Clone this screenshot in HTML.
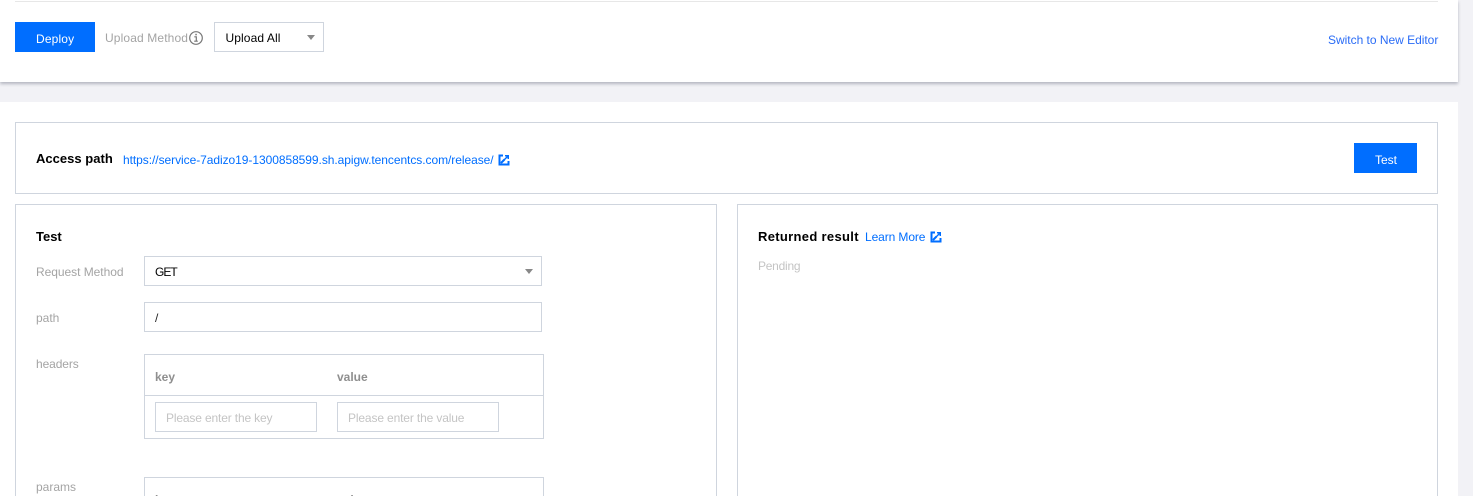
<!DOCTYPE html>
<html>
<head>
<meta charset="utf-8">
<style>
html,body{margin:0;padding:0;width:1473px;height:496px;overflow:hidden;background:#f2f2f6}
body{position:relative;font-family:"Liberation Sans","Noto Sans CJK SC",sans-serif;font-size:12px;color:#000}
.a{position:absolute;box-sizing:border-box}
.t{position:absolute;white-space:nowrap;line-height:18px;height:18px}
.b{border:1px solid #cfd5de;background:#fff}
.g{color:#a4a4a4}
.ph{color:#c4c4c4}
.l{color:#006eff}
.h{font-weight:bold;font-size:13px;color:#000}
.th{font-weight:bold;color:#8f8f8f}
.tri{position:absolute;width:0;height:0;border-left:4.5px solid transparent;border-right:4.5px solid transparent;border-top:5px solid #888}
svg{position:absolute}
</style>
</head>
<body>
<div class="a" style="left:0;top:0;width:1458px;height:82px;background:#fff;box-shadow:0 2px 3px rgba(54,58,80,.32)"></div>
<div class="a" style="left:0;top:102px;width:1458px;height:394px;background:#fff"></div>
<div class="a" style="left:15px;top:1px;width:1423px;height:1px;background:#e7e7e7"></div>

<div class="a" style="left:15px;top:22px;width:80px;height:30px;background:#006eff"></div>
<div class="t" style="left:36px;top:30px;color:#fff;letter-spacing:.15px">Deploy</div>
<div class="t g" style="left:105px;top:29px;letter-spacing:.13px">Upload Method</div>
<svg style="left:188px;top:30px" width="16" height="16" viewBox="0 0 16 16">
  <circle cx="8" cy="8" r="6.3" fill="none" stroke="#777" stroke-width="1.2"/>
  <rect x="7.3" y="3.8" width="1.5" height="1.5" fill="#777"/>
  <path d="M6.3 6.8H8.3V11M6.2 11.2H9.8" fill="none" stroke="#777" stroke-width="1.2"/>
</svg>
<div class="a b" style="left:214px;top:22px;width:110px;height:30px"></div>
<div class="t" style="left:225.500px;top:29px;letter-spacing:.1px">Upload All</div>
<div class="tri" style="left:306.500px;top:35px"></div>
<div class="t l" style="left:1328px;top:31px;letter-spacing:-.02px;color:#2a6cf6">Switch to New Editor</div>

<div class="a b" style="left:15px;top:122px;width:1423px;height:72px"></div>
<div class="t h" style="left:36px;top:150px;letter-spacing:.02px">Access path</div>
<div class="t l" style="left:123px;top:151px;letter-spacing:-.055px">https://service-7adizo19-1300858599.sh.apigw.tencentcs.com/release/</div>
<svg style="left:498px;top:154px" width="12" height="12" viewBox="0 0 12 12">
  <path d="M5 1.500H1.500V10.500H10.500V7" fill="none" stroke="#006eff" stroke-width="2"/>
  <path d="M7 1H11V5H9.500V3.500L6 7L5 6L8.500 2.500H7Z" fill="#006eff"/>
  <path d="M3 9L6.500 5.500" stroke="#006eff" stroke-width="2"/>
</svg>
<div class="a" style="left:1354px;top:143px;width:63px;height:30px;background:#006eff"></div>
<div class="t" style="left:1375px;top:151px;color:#fff">Test</div>

<div class="a b" style="left:15px;top:204px;width:702px;height:292px;border-bottom:0"></div>
<div class="t h" style="left:36px;top:228px">Test</div>

<div class="t g" style="left:36px;top:263px;letter-spacing:-.04px">Request Method</div>
<div class="a b" style="left:144px;top:256px;width:398px;height:30px"></div>
<div class="t" style="left:155px;top:263px;letter-spacing:-1px">GET</div>
<div class="tri" style="left:524.500px;top:269px"></div>

<div class="t g" style="left:36px;top:309px">path</div>
<div class="a b" style="left:144px;top:302px;width:398px;height:30px"></div>
<div class="t" style="left:155px;top:309px;color:#222">/</div>

<div class="t g" style="left:36px;top:355px;letter-spacing:-.1px">headers</div>
<div class="a b" style="left:144px;top:354px;width:400px;height:85px"></div>
<div class="a" style="left:144px;top:395px;width:400px;height:1px;background:#cfd5de"></div>
<div class="t th" style="left:155px;top:368px">key</div>
<div class="t th" style="left:337px;top:368px">value</div>
<div class="a b" style="left:155px;top:402px;width:162px;height:30px"></div>
<div class="t ph" style="left:166px;top:409px;letter-spacing:-.15px">Please enter the key</div>
<div class="a b" style="left:337px;top:402px;width:162px;height:30px"></div>
<div class="t ph" style="left:348px;top:409px;letter-spacing:-.14px">Please enter the value</div>

<div class="t g" style="left:36px;top:478px">params</div>
<div class="a b" style="left:144px;top:477px;width:400px;height:19px;border-bottom:0;overflow:hidden">
  <div class="t th" style="left:10px;top:13px">key</div>
  <div class="t th" style="left:192px;top:13px">value</div>
</div>

<div class="a b" style="left:737px;top:204px;width:701px;height:292px;border-bottom:0"></div>
<div class="t h" style="left:758px;top:228px;letter-spacing:.32px">Returned result</div>
<div class="t l" style="left:865px;top:228px;letter-spacing:-.1px">Learn More</div>
<svg style="left:930px;top:231px" width="12" height="12" viewBox="0 0 12 12">
  <path d="M5 1.500H1.500V10.500H10.500V7" fill="none" stroke="#006eff" stroke-width="2"/>
  <path d="M7 1H11V5H9.500V3.500L6 7L5 6L8.500 2.500H7Z" fill="#006eff"/>
  <path d="M3 9L6.500 5.500" stroke="#006eff" stroke-width="2"/>
</svg>
<div class="t ph" style="left:758px;top:257px;letter-spacing:-.25px">Pending</div>
</body>
</html>
